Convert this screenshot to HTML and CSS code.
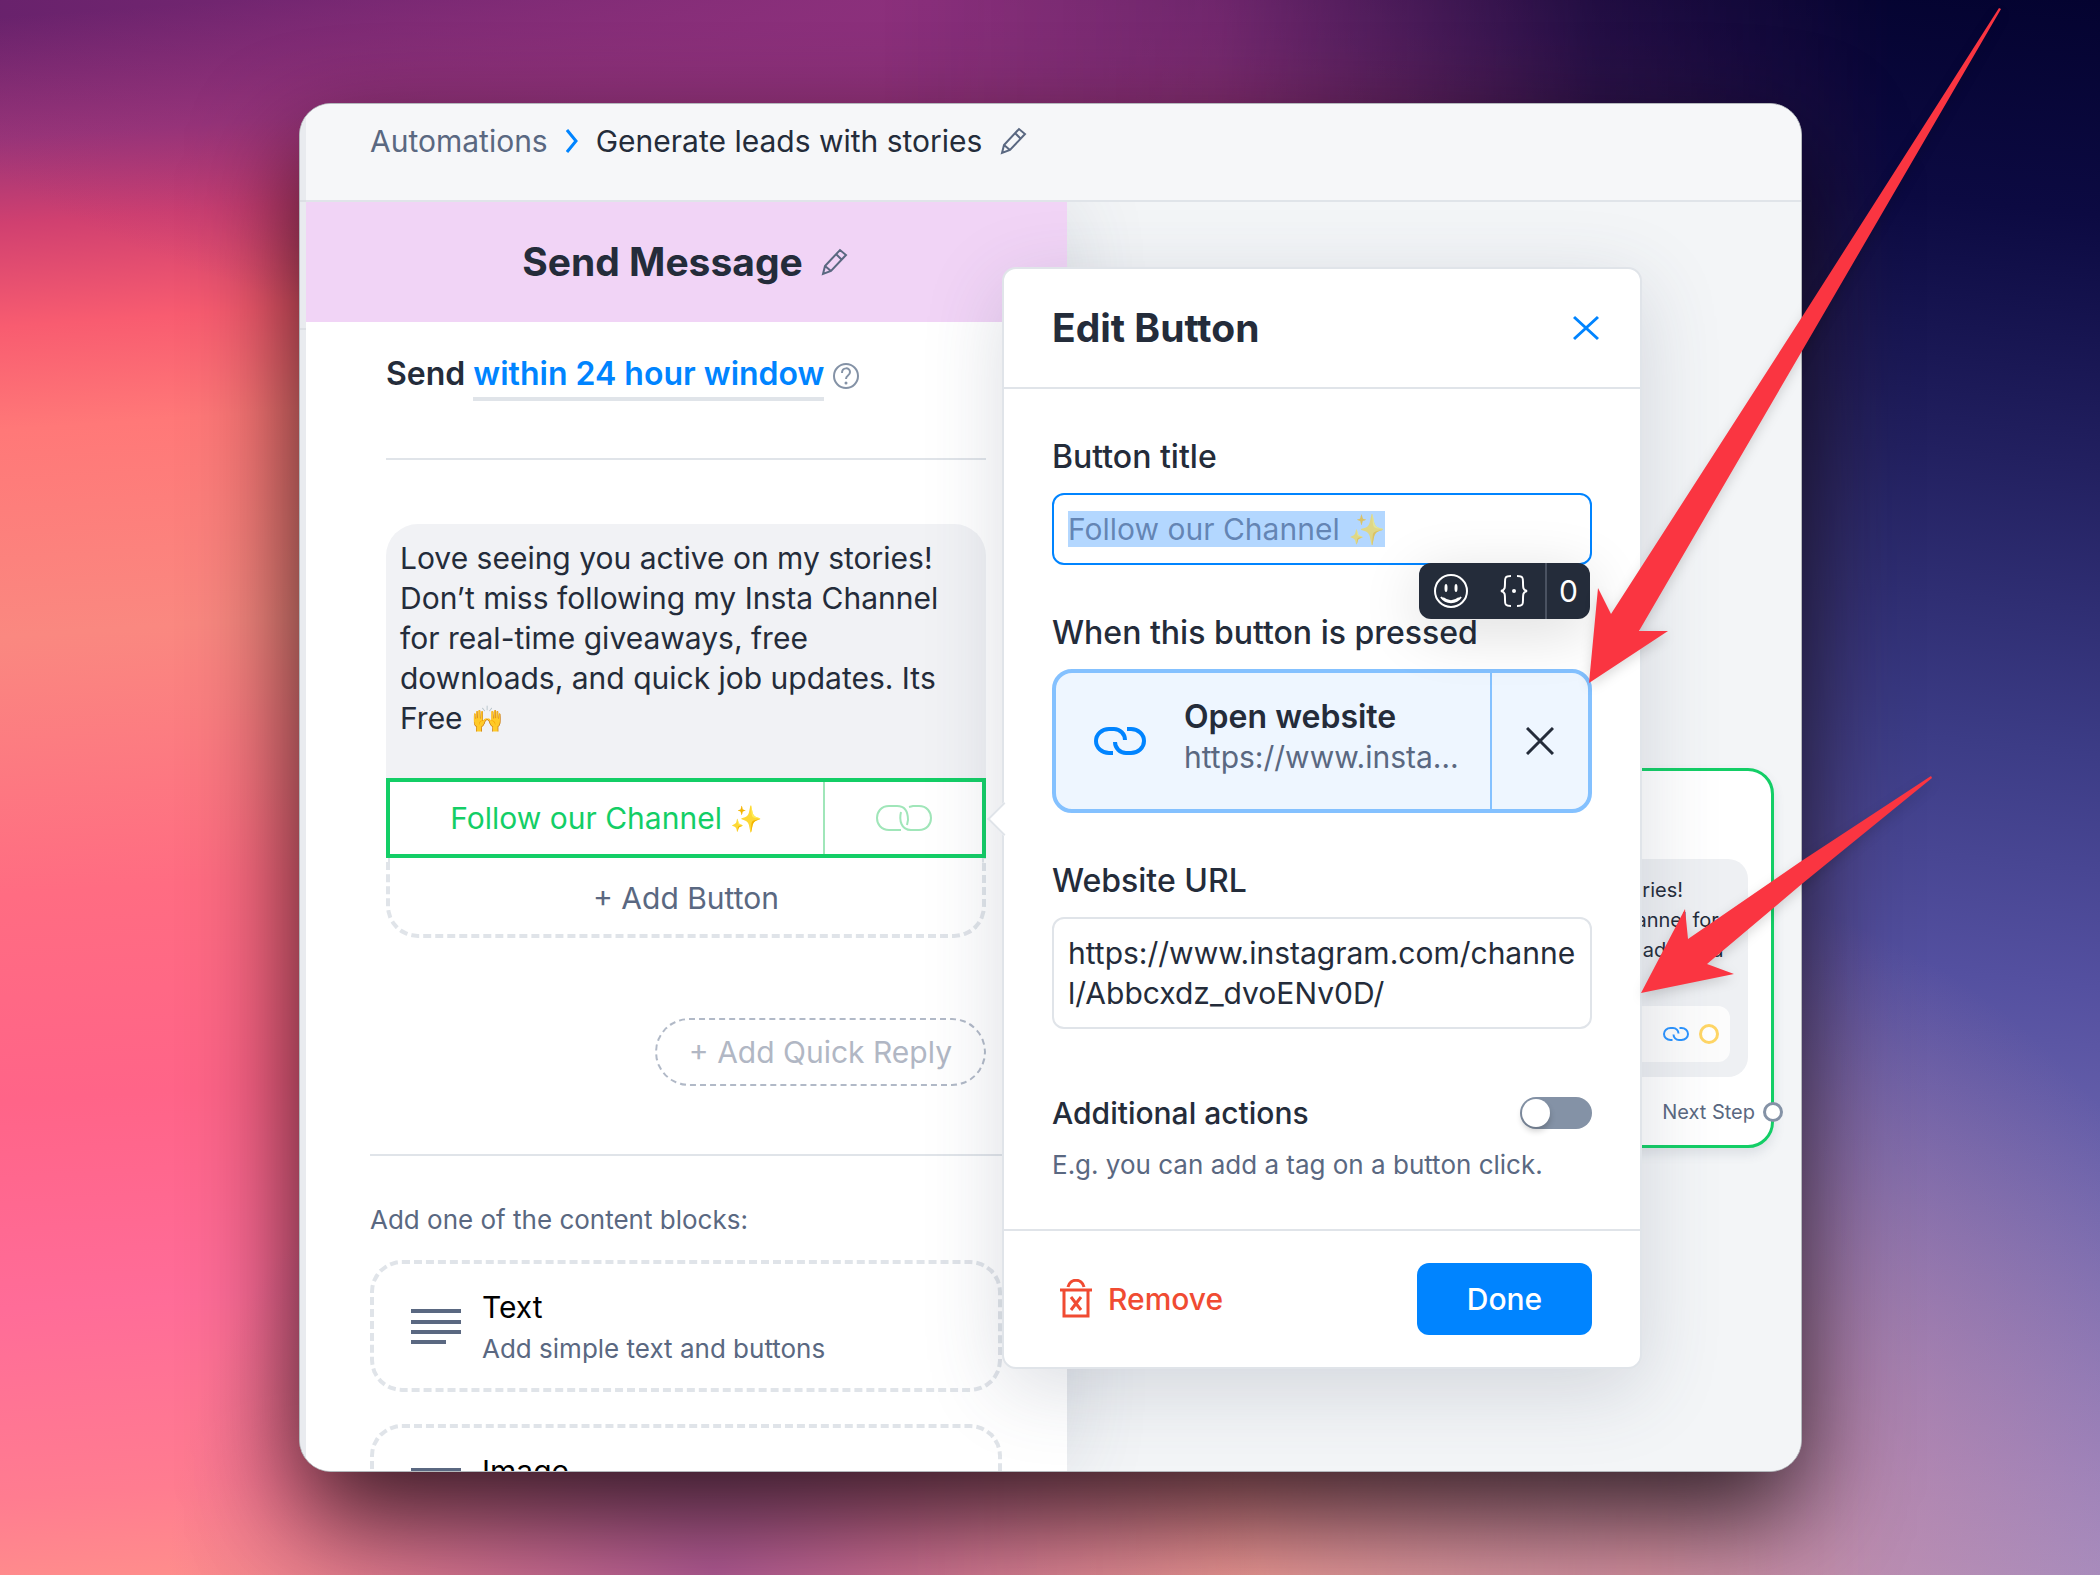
FILE: index.html
```html
<!DOCTYPE html>
<html lang="en">
<head>
    <meta charset="utf-8">
    <title>Generate leads with stories</title>
    <link rel="stylesheet" href="styles.css">
</head>
<body>
    <div class="window">
        <div class="rail">
            <div class="rail-top"></div>
            <div class="rail-head"></div>
        </div>

        <div class="main">
            <nav class="topbar">
                <a class="crumb" href="#">Automations</a>
                <svg class="chevron" width="12" height="24" viewBox="0 0 12 24"><path d="M1 1l9 11-9 11" fill="none" stroke="#0084ff" stroke-width="3"/></svg>
                <span class="crumb-current">Generate leads with stories</span>
                <svg class="pencil" width="28" height="28" viewBox="0 0 28 28"><path d="M2 26l2-8L19 2l6 5L10 23zM4 18l6 5M15 6l6 6" fill="none" stroke="#5a6881" stroke-width="2"/></svg>
            </nav>

            <div class="workspace">
                <section class="panel">
                    <header class="panel-header">
                        <h1>Send Message</h1>
                        <svg class="pencil" width="28" height="28" viewBox="0 0 28 28"><path d="M2 26l2-8L19 2l6 5L10 23zM4 18l6 5M15 6l6 6" fill="none" stroke="#5a6881" stroke-width="2"/></svg>
                    </header>

                    <div class="message">
                        <div class="send-row">
                            <span>Send <a href="#">within 24 hour window</a></span>
                            <svg width="28" height="28" viewBox="0 0 28 28"><g fill="none" stroke="#8492a6" stroke-width="2"><circle cx="14" cy="14" r="12"/><path d="M10 11c0-6 8-6 8-1 0 4-4 3-4 7"/></g><circle cx="14" cy="21" r="1.5" fill="#8492a6"/></svg>
                        </div>
                        <hr>
                        <div class="bubble">Love seeing you active on my stories! Don’t miss following my Insta Channel for real-time giveaways, free downloads, and quick job updates. Its Free <span class="emoji">🙌</span></div>
                        <button class="link-button">
                            <span class="link-title"><span>Follow our Channel <span class="emoji">✨</span></span></span>
                            <span class="link-icon">
                                <svg width="58" height="28" viewBox="0 0 58 28"><path d="M26 26H14C-2 26-2 2 14 2h8c8 0 11 6 11 14l-1 5M34 3l4-1h6c16 0 16 24 0 24h-8c-10 0-12-10-10-18" fill="none" stroke="#a0e6b9" stroke-width="2"/></svg>
                            </span>
                        </button>
                        <button class="add-button">+ Add Button</button>
                        <button class="quick-reply">+ Add Quick Reply</button>
                    </div>

                    <div class="blocks">
                        <hr>
                        <p>Add one of the content blocks:</p>
                        <button class="block">
                            <svg width="50" height="38" viewBox="0 0 50 38"><path d="M0 4h50M0 15h50M0 25h50M0 35h35" stroke="#5a6881" stroke-width="4"/></svg>
                            <span class="block-text">
                                <span class="block-title">Text</span>
                                <span class="block-sub">Add simple text and buttons</span>
                            </span>
                        </button>
                        <button class="block">
                            <svg width="50" height="44" viewBox="0 0 50 44"><path d="M2 2h46v40H2zM4 34l14-14 10 10 8-6 10 10" fill="none" stroke="#5a6881" stroke-width="4"/></svg>
                            <span class="block-text">
                                <span class="block-title">Image</span>
                                <span class="block-sub">Add image and buttons</span>
                            </span>
                        </button>
                    </div>
                </section>

                <section class="canvas">
                    <div class="node">
                        <div class="node-bubble">
                            <div class="node-text">Love seeing you active on my stories!<br>Don’t miss following my Insta Channel for<br>real-time giveaways, free downloads, and</div>
                            <div class="node-button">
                                <svg width="26" height="14" viewBox="0 0 52 28"><path d="M19 26H15A13 12 0 0 1 15 2H20A11 11 0 0 1 31 13M33 2H37A13 12 0 0 1 37 26H32A11 11 0 0 1 21 15" fill="none" stroke="#2b94ff" stroke-width="4"/></svg>
                                <span class="dot dot-yellow"></span>
                            </div>
                        </div>
                        <div class="next-step">Next Step</div>
                        <span class="dot next-dot"></span>
                    </div>
                </section>
            </div>
        </div>

        <form class="popup">
            <header class="popup-header">
                <h2>Edit Button</h2>
                <button type="button" class="close" aria-label="Close">
                    <svg width="26" height="26" viewBox="0 0 26 26"><path d="M1 2l24 22M25 2L1 24" stroke="#0084ff" stroke-width="3"/></svg>
                </button>
            </header>

            <div class="popup-body">
                <div class="field">
                    <label for="title">Button title</label>
                    <div class="title-wrap">
                        <input type="text" id="title" value="Follow our Channel ✨">
                        <div class="toolbar">
                            <button type="button" aria-label="Emoji">
                                <svg width="34" height="34" viewBox="0 0 34 34"><g fill="none" stroke="#fff" stroke-width="2"><circle cx="17" cy="17" r="16"/><path d="M7 23c5 7 15 7 20 0M9 24c5 4 11 4 16 0"/></g><ellipse cx="12" cy="14" rx="1.5" ry="4" fill="#fff"/><ellipse cx="22" cy="14" rx="1.5" ry="4" fill="#fff"/></svg>
                            </button>
                            <button type="button" aria-label="Variable">
                                <svg width="28" height="34" viewBox="0 0 28 34"><path d="M11 2C5 2 5 4 5 8c0 6 0 8-4 9 4 1 4 3 4 9 0 4 0 6 6 6M17 2c6 0 6 2 6 6 0 6 0 8 4 9-4 1-4 3-4 9 0 4 0 6-6 6" fill="none" stroke="#fff" stroke-width="2"/><circle cx="14" cy="17" r="2" fill="#fff"/></svg>
                            </button>
                            <span class="counter">0</span>
                        </div>
                    </div>
                </div>

                <div class="field">
                    <h3>When this button is pressed</h3>
                    <div class="action">
                        <div class="action-main">
                            <svg width="52" height="28" viewBox="0 0 52 28"><path d="M19 26H15A13 12 0 0 1 15 2H20A11 11 0 0 1 31 13M33 2H37A13 12 0 0 1 37 26H32A11 11 0 0 1 21 15" fill="none" stroke="#0084ff" stroke-width="4"/></svg>
                            <div class="action-text">
                                <strong>Open website</strong>
                                <span>https://www.instagram.com/channel/Abbcxdz_dvoENv0D/</span>
                            </div>
                        </div>
                        <button type="button" class="action-remove" aria-label="Remove action">
                            <svg width="28" height="28" viewBox="0 0 28 28"><path d="M1 1l26 26M27 1L1 27" stroke="#242c3a" stroke-width="3"/></svg>
                        </button>
                    </div>
                </div>

                <div class="field">
                    <label for="url">Website URL</label>
                    <textarea id="url" rows="2" spellcheck="false">https://www.instagram.com/channel/Abbcxdz_dvoENv0D/</textarea>
                </div>

                <div class="toggle-row">
                    <label for="actions">Additional actions</label>
                    <input type="checkbox" id="actions">
                </div>
                <p class="hint">E.g. you can add a tag on a button click.</p>
            </div>

            <footer class="popup-footer">
                <button type="button" class="remove">
                    <svg width="34" height="40" viewBox="0 0 34 40"><path d="M1 11h32M5 11v26h24V11M9 8c2-9 14-9 16 0M12 18l10 13M22 18L12 31" fill="none" stroke="#f04b32" stroke-width="3"/></svg>
                    Remove
                </button>
                <button type="submit" class="done">Done</button>
            </footer>
        </form>
    </div>

    <svg class="arrows" viewBox="0 0 2100 1575" preserveAspectRatio="none">
        <path d="M1999 8L1802 317 1611 614 1598 588 1589 683 1668 631H1639L1802 351 2001 9z"/>
        <path d="M1931 776L1800 862 1688 939 1685 909 1641 993 1734 974 1707 964 1803 883 1932 778z"/>
    </svg>

    <script>
        document.getElementById('title').select();
    </script>
</body>
</html>
```

FILE: styles.css
```css
* {
    margin: 0;
    padding: 0;
    box-sizing: border-box;
}

body {
    position: relative;
    height: 100vh;
    padding: 103px 298px 103px 299px;
    display: flex;
    overflow: hidden;
    font-family: Inter, "Noto Color Emoji", sans-serif;
    font-size: 30px;
    line-height: 40px;
    color: #242c3a;
    background:
        radial-gradient(ellipse 50% 24% at 44% 0%, #8c307c, rgba(140, 48, 124, 0)),
        radial-gradient(ellipse 26% 34% at 34% 100%, rgba(170, 84, 150, 0.9), rgba(170, 84, 150, 0)),
        linear-gradient(176deg, #64206a 1%, #983478 8%, #d04070 13%, #f85c70 19%, #ff7878 25%, #fa8880 37%, #ff6c82 52%, #ff6488 64%, #ff6c98 76%, #ff7c90 87%, #ff9c88 97%);
}

/* blue half of the backdrop */
body::before {
    content: "";
    position: absolute;
    inset: 0;
    background:
        radial-gradient(ellipse 30% 44% at 78% 100%, rgba(216, 140, 156, 0.8), rgba(216, 140, 156, 0)),
        linear-gradient(186deg, #040330 0%, #0c0a42 12%, #222060 26%, #3c3c86 42%, #5450a0 55%, #7068b0 68%, #9080c0 82%, #b0a0cc 98%);
    -webkit-mask-image: linear-gradient(to right, transparent 42%, rgba(0, 0, 0, 0.2) 58%, rgba(0, 0, 0, 0.8) 76%, #000 90%);
    mask-image: linear-gradient(to right, transparent 42%, rgba(0, 0, 0, 0.2) 58%, rgba(0, 0, 0, 0.8) 76%, #000 90%);
}

button {
    font: inherit;
    color: inherit;
    background: none;
    border: none;
    cursor: pointer;
}

a {
    text-decoration: none;
}

svg {
    display: block;
    flex: none;
}

hr {
    border: none;
    border-top: 2px solid #e0e4e9;
}

.emoji {
    font-size: 26px;
    line-height: 26px;
    vertical-align: 1px;
}

.window {
    position: relative;
    flex: 1;
    display: flex;
    overflow: hidden;
    background: #f3f5f7;
    border: 1px solid #b4b8bc;
    border-radius: 32px;
    box-shadow: 0 44px 104px rgba(0, 0, 0, 0.76);
}

.rail {
    position: relative;
    z-index: 2;
    width: 6px;
    background: #e9ebef;
}

.rail-top {
    height: 98px;
    border-bottom: 2px solid #dcdfe4;
}

.rail-head {
    height: 128px;
    border-bottom: 2px solid #dcdfe4;
}

.main {
    flex: 1;
    min-width: 0;
    display: flex;
    flex-direction: column;
}

.topbar {
    position: relative;
    z-index: 2;
    display: flex;
    align-items: flex-start;
    height: 98px;
    padding: 17px 64px;
    background: #f6f7f9;
    border-bottom: 2px solid #e0e4e9;
}

.crumb {
    color: #5a6881;
}

.chevron {
    margin: 8px 18px;
}

.topbar .pencil {
    margin: 6px 18px;
}

.workspace {
    flex: 1;
    min-height: 0;
    display: flex;
}

/* left panel */
.panel {
    position: relative;
    z-index: 1;
    width: 761px;
    background: #fff;
    box-shadow: 0 0 80px rgba(60, 70, 100, 0.14);
}

.panel-header {
    display: flex;
    justify-content: center;
    align-items: center;
    gap: 18px;
    height: 120px;
    padding-right: 2px;
    background: #f1d4f6;
}

h1,
h2 {
    font-size: 39px;
    line-height: 48px;
    font-weight: 700;
}

.message {
    display: flex;
    flex-direction: column;
    padding: 32px 81px 68px 80px;
}

.send-row {
    display: flex;
    align-items: flex-start;
    gap: 8px;
    font-size: 32px;
    font-weight: 600;
}

.send-row a {
    display: inline-block;
    color: #0084ff;
    padding-bottom: 3px;
    border-bottom: 4px solid #e0e4e9;
}

.send-row svg {
    margin-top: 8px;
}

.message hr {
    margin: 57px 0 64px;
}

.bubble {
    padding: 14px 40px 40px 14px;
    background: #f1f2f5;
    border-radius: 32px 32px 0 0;
}

.link-button {
    display: flex;
    height: 80px;
    border: 4px solid #13ce66;
    background: #fff;
    color: #13ce66;
}

.link-title {
    flex: 1;
    display: flex;
    justify-content: center;
    align-self: center;
}

.link-icon {
    display: flex;
    justify-content: center;
    align-items: center;
    width: 159px;
    align-self: stretch;
    border-left: 2px solid #a0e6b9;
}

.add-button {
    height: 80px;
    padding-top: 4px;
    border: 4px dashed #e0e4e9;
    border-top: none;
    border-radius: 0 0 32px 32px;
    color: #5a6881;
}

.quick-reply {
    align-self: flex-end;
    height: 68px;
    margin-top: 80px;
    padding: 0 32px;
    border: 2px dashed #b1b9c7;
    border-radius: 34px;
    color: #b1b7c4;
}

.blocks {
    padding: 0 65px 0 64px;
}

.blocks p {
    margin: 48px 0 24px;
    font-size: 26px;
    line-height: 32px;
    color: #5a6881;
}

.block {
    display: flex;
    align-items: center;
    gap: 21px;
    width: 100%;
    height: 132px;
    margin-bottom: 32px;
    padding: 0 37px;
    border: 4px dashed #e0e4e9;
    border-radius: 32px;
    text-align: left;
}

.block-text {
    display: flex;
    flex-direction: column;
    gap: 6px;
}

.block-title {
    color: #000;
}

.block-sub {
    font-size: 26px;
    line-height: 32px;
    color: #5a6881;
}

/* flow canvas */
.canvas {
    position: relative;
    flex: 1;
    background: #f3f5f7;
}

.node {
    position: absolute;
    top: 566px;
    right: 27px;
    width: 490px;
    height: 380px;
    padding: 88px 23px 0;
    background: #fff;
    border: 3px solid #13ce66;
    border-radius: 26px;
    box-shadow: 0 6px 12px rgba(60, 70, 100, 0.12);
}

.node-bubble {
    height: 218px;
    padding: 16px 18px;
    background: #eef0f3;
    border-radius: 20px;
}

.node-text {
    font-size: 20px;
    line-height: 30px;
    white-space: nowrap;
}

.node-button {
    display: flex;
    justify-content: flex-end;
    align-items: center;
    gap: 10px;
    height: 56px;
    margin-top: 41px;
    padding-right: 11px;
    background: #fcfcfc;
    border-radius: 12px;
}

.dot {
    width: 20px;
    height: 20px;
    border: 3px solid #8492a6;
    border-radius: 50%;
    background: #fff;
}

.dot-yellow {
    border-color: #ffd666;
}

.next-step {
    margin: 20px -7px 0 0;
    font-size: 20px;
    line-height: 30px;
    text-align: right;
    color: #5a6881;
}

.next-dot {
    position: absolute;
    right: -12px;
    bottom: 23px;
}

/* edit popup */
.popup {
    position: absolute;
    z-index: 3;
    top: 163px;
    left: 702px;
    width: 640px;
    background: #fff;
    border: 2px solid #e0e4e9;
    border-radius: 14px;
    box-shadow: 0 20px 80px rgba(60, 70, 100, 0.18);
}

/* pointer towards the edited button */
.popup::before {
    content: "";
    position: absolute;
    top: 538px;
    left: -12px;
    width: 22px;
    height: 22px;
    background: #fff;
    border: 2px solid #e0e4e9;
    border-top: none;
    border-right: none;
    transform: rotate(45deg);
}

.popup-header {
    display: flex;
    justify-content: space-between;
    align-items: center;
    height: 120px;
    padding: 0 41px 0 48px;
    border-bottom: 2px solid #e0e4e9;
}

.popup-body {
    padding: 48px;
}

.field {
    margin-bottom: 48px;
}

.field label,
.field h3 {
    display: block;
    margin-bottom: 16px;
    font-size: 32px;
    line-height: 40px;
    font-weight: 500;
}

.title-wrap {
    position: relative;
}

input[type="text"],
textarea {
    display: block;
    width: 100%;
    font: inherit;
    color: inherit;
    background: #fff;
    border: 2px solid #e0e4e9;
    border-radius: 12px;
    outline: none;
}

input[type="text"] {
    height: 72px;
    padding: 0 14px;
    border-color: #0084ff;
    color: rgba(46, 77, 130, 0.6);
}

input[type="text"]::selection {
    background: #b3d7ff;
    color: rgba(46, 77, 130, 0.6);
}

textarea {
    height: 112px;
    padding: 14px;
    resize: none;
    overflow: hidden;
    word-break: break-all;
}

.toolbar {
    position: absolute;
    top: 70px;
    right: 2px;
    display: flex;
    align-items: center;
    height: 56px;
    background: #242c3a;
    border-radius: 12px;
    color: #fff;
    box-shadow: 0 12px 60px rgba(0, 0, 0, 0.14);
}

.toolbar button {
    display: flex;
    padding: 0 17px 0 15px;
}

.counter {
    align-self: stretch;
    padding: 8px 12px;
    border-left: 2px solid #4a5261;
}

.action {
    display: flex;
    height: 144px;
    background: #eef6ff;
    border: 4px solid #84c1ff;
    border-radius: 20px;
}

.action-main {
    flex: 1;
    min-width: 0;
    display: flex;
    align-items: center;
    gap: 38px;
    padding: 0 24px 0 38px;
}

.action-text {
    min-width: 0;
    display: flex;
    flex-direction: column;
    padding-bottom: 8px;
}

.action-text strong {
    font-size: 32px;
    font-weight: 600;
}

.action-text span {
    overflow: hidden;
    text-overflow: ellipsis;
    white-space: nowrap;
    color: #5a6881;
}

.action-remove {
    display: flex;
    justify-content: center;
    align-items: center;
    width: 98px;
    border-left: 2px solid #84c1ff;
}

.toggle-row {
    display: flex;
    justify-content: space-between;
    align-items: center;
    margin-top: 64px;
    font-weight: 500;
}

input[type="checkbox"] {
    appearance: none;
    width: 72px;
    height: 32px;
    padding: 2px;
    background: #8492a6;
    border-radius: 16px;
}

input[type="checkbox"]::before {
    content: "";
    display: block;
    width: 28px;
    height: 28px;
    background: #fff;
    border-radius: 50%;
    box-shadow: 0 4px 6px rgba(0, 0, 0, 0.2);
}

.hint {
    margin-top: 16px;
    font-size: 26px;
    line-height: 32px;
    color: #5a6881;
}

.popup-footer {
    display: flex;
    justify-content: space-between;
    align-items: center;
    height: 138px;
    padding: 0 48px;
    border-top: 2px solid #e0e4e9;
    font-weight: 500;
}

.remove {
    display: flex;
    align-items: center;
    gap: 15px;
    padding-left: 7px;
    color: #f04b32;
}

.done {
    width: 175px;
    height: 72px;
    background: #0084ff;
    border-radius: 12px;
    color: #fff;
}

/* red callout arrows lie over everything */
.arrows {
    position: absolute;
    z-index: 4;
    top: 0;
    left: 0;
    width: 100%;
    height: 100%;
    pointer-events: none;
    fill: #fa3541;
    filter: drop-shadow(0 4px 6px rgba(0, 0, 0, 0.15));
}
```
